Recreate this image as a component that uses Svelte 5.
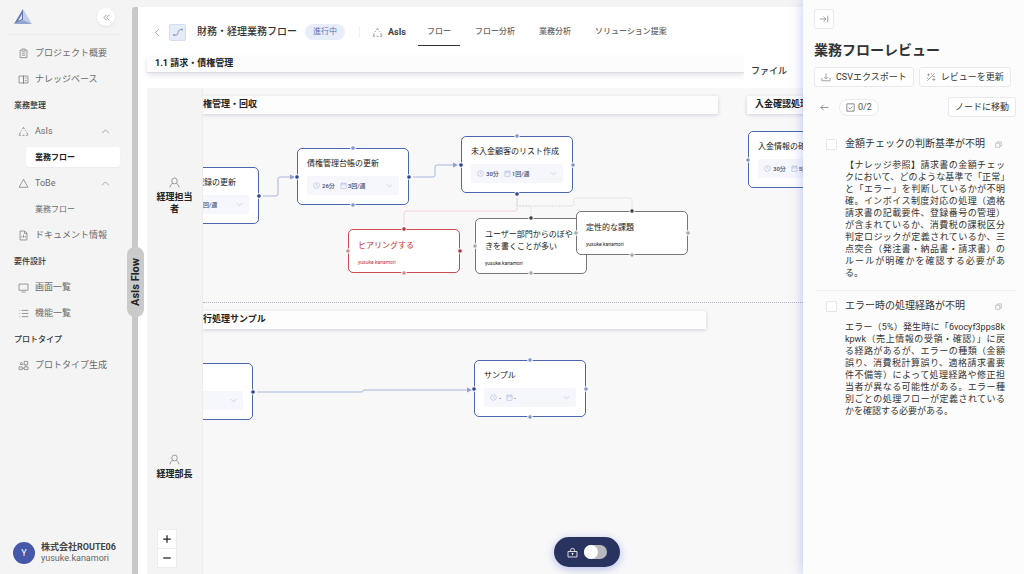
<script lang="ts">
  type IconName = keyof typeof icons;

  type NavItem = {
    label: string;
    kind: 'link' | 'heading' | 'group' | 'sub';
    icon?: IconName;
    active?: boolean;
  };

  type FlowNode = {
    x: number;
    y: number;
    w: number;
    title: string;
    time?: string;
    freq?: string;
    plain?: boolean;
  };

  type IssueNode = {
    x: number;
    y: number;
    title: string;
    tone: 'red' | 'gray';
  };

  const icons = {
    clipboard: 'M4 3H3v11h10V3h-1M5.5 1.5h5v3h-5zM5.5 7.5h5M5.5 10.5h5',
    book: 'M8 3H1.500v10H8zM8 3h6.500v10H8zM8 2v12.500M10 6h2.500M10 9.500h2.500',
    dashed: 'M6.500 4.500 8 2l1.500 2.500M3.500 9 2 12v1.500h2.500M12.500 9l1.500 3v1.500h-2.500M6.500 13.500h3M4.500 7l.8-1.300M11.500 7l-.8-1.300',
    triangle: 'M8 2 14.500 13.500h-13z',
    doc: 'M3 1.500h7l3 3v10H3zM9.500 2v3H13M5.500 11V9M8 11V7M10.500 11V8.500',
    screen: 'M1.500 3h13v9h-13zM5 14.500h6',
    list: 'M2 3.500h1M5.500 3.500H15M2 8h1M5.500 8H15M2 12.500h1M5.500 12.500H15',
    proto: 'M3 6.500 5 3l2 3.500zM9 2h5v5H9zM1.500 10h4.500v4H1.500zM9 10h5.500v4H9zM11.500 7v3M6 12h3',
    up: 'M2 11l6-6 6 6',
    down: 'M2 5l6 6 6-6',
    collapse: 'M8 3 3.500 8 8 13M13 3 8.500 8 13 13',
    back: 'M10.500 2 4.500 8l6 6',
    user: 'M8 1.500a4 4.200 0 0 1 4 4.200A4 4.200 0 0 1 8 10a4 4.200 0 0 1-4-4.300 4 4.200 0 0 1 4-4.200zM1.500 15c0-3 2-5 4-5.500M14.500 15c0-3-2-5-4-5.500',
    clock: 'M8 1.500a6.500 6.500 0 1 1 0 13 6.500 6.500 0 0 1 0-13zM8 4.500V8l3 2',
    calendar: 'M2 3h12v11.500H2zM2 6.500h12M5 1v3M11 1v3',
    plus: 'M8 2v12M2 8h12',
    minus: 'M2 8h12',
    lock: 'M1.500 6.500h13v8h-13zM5 6.500V5a3 3 0 0 1 6 0v1.500M8 8.500v3.500M6.500 9.500h3',
    toEnd: 'M1.500 8H11M7 4l4 4-4 4M14 2.500v11',
    download: 'M1.500 9.500v4.500h13V9.500M8 2v8.500M5 8l3 3 3-3',
    magic: 'M2 14 13.500 2.500M2 4.500h4M4 2.500v4M10 12h5M12.500 9.500v5M8.500 1.500v2M1.500 9.500l2 1M10.500 7.500l4 0',
    arrowLeft: 'M15 8H1.500M6.500 3l-5 5 5 5',
    check: 'M1.500 1.500h13v13h-13zM4.500 8l2.500 2.500L11.500 6',
    copy: 'M1.500 5h9.500v9.500H1.500zM5 5V2h9.500v9.500H11'
  };

  const nav: NavItem[] = [
    { label: 'プロジェクト概要', kind: 'link', icon: 'clipboard' },
    { label: 'ナレッジベース', kind: 'link', icon: 'book' },
    { label: '業務整理', kind: 'heading' },
    { label: 'AsIs', kind: 'group', icon: 'dashed' },
    { label: '業務フロー', kind: 'sub', active: true },
    { label: 'ToBe', kind: 'group', icon: 'triangle' },
    { label: '業務フロー', kind: 'sub' },
    { label: 'ドキュメント情報', kind: 'link', icon: 'doc' },
    { label: '要件設計', kind: 'heading' },
    { label: '画面一覧', kind: 'link', icon: 'screen' },
    { label: '機能一覧', kind: 'link', icon: 'list' },
    { label: 'プロトタイプ', kind: 'heading' },
    { label: 'プロトタイプ生成', kind: 'link', icon: 'proto' }
  ];

  const tabs = ['フロー', 'フロー分析', '業務分析', 'ソリューション提案'];
  let activeTab = $state('フロー');

  // canvas coordinates, origin at the top left of the flow area
  const nodes: FlowNode[] = [
    { x: -17, y: 79, w: 73, title: '記録の更新', freq: '回/週', plain: true },
    { x: 94, y: 60, w: 112, title: '債権管理台帳の更新', time: '26分', freq: '3回/週' },
    { x: 258, y: 48, w: 112, title: '未入金顧客のリスト作成', time: '30分', freq: '1回/週' },
    { x: 545, y: 43, w: 112, title: '入金情報の確認', time: '30分', freq: '5回/週' },
    { x: -17, y: 275, w: 67, title: '', plain: true },
    { x: 271, y: 272, w: 112, title: 'サンプル', time: '-', freq: '-' }
  ];

  const issues: IssueNode[] = [
    { x: 145, y: 141, title: 'ヒアリングする', tone: 'red' },
    { x: 272, y: 130, title: 'ユーザー部門からのぼやきを書くことが多い', tone: 'gray' },
    { x: 373, y: 123, title: '定性的な課題', tone: 'gray' }
  ];

  const handles = [
    { tone: 'blue', points: [[56, 108], [94, 89], [206, 89], [258, 77], [314, 106], [50, 304], [271, 301]] },
    { tone: 'soft', points: [[150, 60], [150, 117], [314, 48], [370, 77], [545, 72], [327, 272], [327, 329], [383, 301]] },
    { tone: 'red', points: [[201, 141], [257, 163]] },
    { tone: 'pink', points: [[145, 163], [201, 185]] },
    { tone: 'dark', points: [[328, 130], [429, 123]] },
    { tone: 'mute', points: [[272, 158], [373, 145], [485, 145], [429, 167], [328, 185]] }
  ];

  const reviews = [
    {
      title: '金額チェックの判断基準が不明',
      body: '【ナレッジ参照】請求書の金額チェックにおいて、どのような基準で「正常」と「エラー」を判断しているかが不明確。インボイス制度対応の処理（適格請求書の記載要件、登録番号の管理）が含まれているか、消費税の課税区分判定ロジックが定義されているか、三点突合（発注書・納品書・請求書）のルールが明確かを確認する必要がある。'
    },
    {
      title: 'エラー時の処理経路が不明',
      body: 'エラー（5%）発生時に「6vocyf3pps8kkpwk（売上情報の受領・確認）」に戻る経路があるが、エラーの種類（金額誤り、消費税計算誤り、適格請求書要件不備等）によって処理経路や修正担当者が異なる可能性がある。エラー種別ごとの処理フローが定義されているかを確認する必要がある。'
    }
  ];

  let unlocked = $state(false);
</script>

{#snippet icon(name: IconName, size = 10)}
  <svg class="icon" width={size} height={size} viewBox="0 0 16 16" aria-hidden="true">
    <path d={icons[name]} />
  </svg>
{/snippet}

<div class="app" lang="ja">
  <aside class="sidebar">
    <div class="brand">
      <svg width="19" height="16" viewBox="0 0 19 16" aria-hidden="true">
        <path d="M9 0 0 15l9-4z" fill="#6478b4" />
        <path d="M9 0v11l9 4z" fill="#c3cde8" />
        <path d="M0 15l9-4 9 4z" fill="#93a3d0" />
        <path d="M8 5 4 12l4-2z" fill="#e3e9f6" />
      </svg>
      <button class="collapse" aria-label="サイドバーを閉じる">{@render icon('collapse', 9)}</button>
    </div>

    <nav class="nav">
      {#each nav as item}
        {#if item.kind === 'heading'}
          <div class="nav-heading">{item.label}</div>
        {:else if item.kind === 'group'}
          <button class="nav-item">
            {#if item.icon}{@render icon(item.icon, 11)}{/if}
            <span class="nav-label">{item.label}</span>
            {@render icon('up', 9)}
          </button>
        {:else if item.kind === 'sub'}
          <a class="nav-sub" class:active={item.active} href="#flow">{item.label}</a>
        {:else}
          <a class="nav-item" href="#page">
            {#if item.icon}{@render icon(item.icon, 11)}{/if}
            <span class="nav-label">{item.label}</span>
          </a>
        {/if}
      {/each}
    </nav>

    <div class="account">
      <span class="avatar">Y</span>
      <div class="account-text">
        <strong>株式会社ROUTE06</strong>
        <span>yusuke.kanamori</span>
      </div>
    </div>
  </aside>

  <div class="rail"><span class="rail-tab">AsIs Flow</span></div>

  <main class="main">
    <header class="header">
      <button class="back" aria-label="戻る">{@render icon('back', 9)}</button>
      <span class="flow-icon">
        <svg width="12" height="12" viewBox="0 0 12 12" aria-hidden="true">
          <path d="M2 9c3.500.5 3.500-.5 4-2.500s1-3 4-3" />
          <circle cx="2" cy="9" r="1" />
          <circle cx="10" cy="3.500" r="1" />
        </svg>
      </span>
      <h1 class="title">財務・経理業務フロー</h1>
      <span class="status">進行中</span>
      <span class="phase">{@render icon('dashed', 11)} AsIs</span>
      <div class="tabs" role="tablist">
        {#each tabs as tab}
          <button
            class="tab"
            class:active={tab === activeTab}
            role="tab"
            aria-selected={tab === activeTab}
            onclick={() => (activeTab = tab)}>{tab}</button
          >
        {/each}
      </div>
    </header>

    <div class="subheader">
      <h2 class="flow-name">1.1 請求・債権管理</h2>
      <button class="file">ファイル</button>
    </div>

    <div class="board">
      <div class="lanes">
        <div class="lane">{@render icon('user', 11)}<span>経理担当者</span></div>
        <div class="lane lane-tall">{@render icon('user', 11)}<span>経理部長</span></div>
        <div class="zoom">
          <button aria-label="拡大">{@render icon('plus')}</button>
          <button aria-label="縮小">{@render icon('minus')}</button>
        </div>
      </div>

      <div class="canvas">
        <div class="band band-a">権管理・回収</div>
        <div class="band band-b">入金確認処理</div>
        <div class="separator"></div>
        <div class="band band-c">行処理サンプル</div>

        <svg class="edges" aria-hidden="true">
          <g class="edge-blue">
            <path d="M60 108H73q2 0 2-2V91q0-2 2-2H88" />
            <path d="M210 89h20q2 0 2-2V79q0-2 2-2h17" />
            <path d="M54 304H158q2 0 2-1t2-1H265" />
          </g>
          <g class="arrow">
            <path d="M87 86.500v5l5-2.500z" />
            <path d="M250 74.500v5l5-2.500z" />
            <path d="M264 299.500v5l5-2.500z" />
          </g>
          <path class="edge-red" d="M314 110v11q0 2-2 2H203q-2 0-2 2v12" />
          <path class="edge-gray" d="M314 110v6q0 2 2 2h10q2 0 2 2v7" />
          <path class="edge-gray" d="M314 116q0 2 2 2h53q2 0 2-2v-4q0-2 2-2h54q2 0 2 2v9" />
        </svg>

        {#each nodes as node}
          <article class="node" style="left: {node.x}px; top: {node.y}px; width: {node.w}px">
            <div class="node-title">{node.title}</div>
            <div class="meta">
              {#if !node.plain}{@render icon('clock', 7)}<span class="time">{node.time}</span>{@render icon('calendar', 7)}{/if}
              <span class="freq">{node.freq}</span>
              {@render icon('down', 7)}
            </div>
          </article>
        {/each}

        {#each issues as issue}
          <article class="issue {issue.tone}" style="left: {issue.x}px; top: {issue.y}px">
            <div class="node-title">{issue.title}</div>
            <div class="owner">yusuke.kanamori</div>
          </article>
        {/each}

        <svg class="edges" aria-hidden="true">
          {#each handles as group}
            {#each group.points as [x, y]}
              <circle class="handle {group.tone}" cx={x} cy={y} r="2.300" />
            {/each}
          {/each}
        </svg>
      </div>

      <label class="lock">
        {@render icon('lock', 11)}
        <input type="checkbox" role="switch" aria-label="ロックを解除" bind:checked={unlocked} />
      </label>
    </div>
  </main>

  <aside class="review">
    <button class="btn btn-square" aria-label="閉じる">{@render icon('toEnd')}</button>
    <h2 class="review-title">業務フローレビュー</h2>
    <div class="actions">
      <button class="btn">{@render icon('download')} CSVエクスポート</button>
      <button class="btn">{@render icon('magic')} レビューを更新</button>
    </div>
    <div class="review-nav">
      <button class="prev" aria-label="前へ">{@render icon('arrowLeft', 9)}</button>
      <span class="count">{@render icon('check', 9)} 0/2</span>
      <button class="btn jump">ノードに移動</button>
    </div>

    <ul class="reviews">
      {#each reviews as review, i}
        <li class="review-item">
          <input type="checkbox" id="review-{i}" />
          <div class="review-content">
            <div class="review-head">
              <label for="review-{i}">{review.title}</label>
              <button class="copy" aria-label="コピー">{@render icon('copy', 7)}</button>
            </div>
            <p>{review.body}</p>
          </div>
        </li>
      {/each}
    </ul>
  </aside>
</div>

<style>
  :global(body) {
    background: #f4f4f4;
  }

  .app {
    display: flex;
    min-height: 100vh;
    overflow: hidden;
    font-family: Roboto, 'Noto Sans CJK JP', sans-serif;
    font-size: 9px;
    line-height: 12px;
    color: #333;
  }

  .app * {
    box-sizing: border-box;
  }

  button {
    margin: 0;
    padding: 0;
    border: none;
    background: none;
    font: inherit;
    color: inherit;
    cursor: pointer;
  }

  a {
    color: inherit;
    text-decoration: none;
  }

  h1,
  h2,
  p,
  ul {
    margin: 0;
    padding: 0;
  }

  .icon {
    flex: none;
    fill: none;
    stroke: currentColor;
    stroke-width: 1.2;
  }

  /* sidebar */
  .sidebar {
    flex: none;
    width: 132px;
    display: flex;
    flex-direction: column;
    background: #f4f4f4;
  }

  .brand {
    display: flex;
    align-items: center;
    justify-content: space-between;
    height: 35px;
    margin: 0 11px 5px 8px;
    padding: 0 6px;
    border-bottom: 1px solid #ebebeb;
  }

  .collapse {
    display: grid;
    place-items: center;
    width: 18px;
    height: 18px;
    border-radius: 50%;
    background: #fff;
    color: #777;
    box-shadow: 0 1px 3px rgba(0, 0, 0, 0.08);
  }

  .nav {
    flex: 1;
    display: flex;
    flex-direction: column;
    color: #6b6b6b;
  }

  .nav-item {
    display: flex;
    align-items: center;
    gap: 6px;
    height: 26px;
    padding: 0 22px 0 18px;
    text-align: left;
    white-space: nowrap;
  }

  .nav-item .icon {
    color: #858585;
  }

  .nav-label {
    flex: 1;
  }

  .nav-heading {
    height: 26px;
    padding-left: 14px;
    font-size: 8px;
    font-weight: 500;
    line-height: 27px;
    color: #333;
  }

  .nav-sub {
    height: 20px;
    margin: 3px 12px 3px 26px;
    padding-left: 9px;
    border-radius: 3px;
    font-size: 8px;
    line-height: 21px;
  }

  .nav-sub.active {
    background: #fff;
    color: #222;
    font-weight: 700;
    box-shadow: 0 1px 2px rgba(0, 0, 0, 0.04);
  }

  .account {
    display: flex;
    align-items: center;
    gap: 6px;
    padding: 0 0 10px 13px;
  }

  .avatar {
    display: grid;
    place-items: center;
    width: 22px;
    height: 22px;
    border-radius: 50%;
    background: #4658aa;
    color: #fff;
  }

  .account-text {
    display: flex;
    flex-direction: column;
    line-height: 11px;
    color: #666;
  }

  .account-text strong {
    color: #444;
  }

  /* rail */
  .rail {
    flex: none;
    position: relative;
    width: 6px;
    margin-top: 7px;
    border-radius: 3px 0 0 0;
    background: #c8c8c8;
  }

  .rail-tab {
    position: absolute;
    top: 240px;
    left: -5px;
    z-index: 2;
    width: 17px;
    height: 70px;
    border-radius: 8px;
    background: #cacaca;
    font-size: 11px;
    font-weight: 700;
    line-height: 17px;
    text-align: center;
    writing-mode: vertical-rl;
    transform: rotate(180deg);
    color: #222;
  }

  /* main */
  .main {
    flex: 1;
    min-width: 0;
    display: flex;
    flex-direction: column;
    margin-top: 7px;
    padding-left: 9px;
    background: #fff;
  }

  .header {
    display: flex;
    align-items: center;
    height: 50px;
    padding-left: 6px;
    white-space: nowrap;
  }

  .back {
    display: flex;
    margin-right: 7px;
    color: #888;
  }

  .flow-icon {
    flex: none;
    display: grid;
    place-items: center;
    width: 17px;
    height: 17px;
    border: 1px solid #d3ddf0;
    border-radius: 2px;
    background: #e6edf9;
  }

  .flow-icon svg {
    fill: none;
    stroke: #7f93c4;
  }

  .flow-icon circle {
    fill: #7f93c4;
    stroke: none;
  }

  .title {
    margin: 0 8px 0 11px;
    font-size: 10px;
    font-weight: 500;
  }

  .status {
    padding: 2px 8px;
    border-radius: 8px;
    background: #e8edfa;
    font-size: 8px;
    color: #5c71b4;
  }

  .phase {
    display: flex;
    align-items: center;
    gap: 5px;
    margin-left: 14px;
    padding-left: 12px;
    border-left: 1px solid #f2f2f2;
    font-weight: 700;
    color: #444;
  }

  .phase .icon {
    color: #888;
  }

  .tabs {
    display: flex;
    gap: 6px;
    margin-left: 12px;
  }

  .tab {
    height: 28px;
    padding: 0 9px;
    border-bottom: 1px solid transparent;
    font-size: 8px;
    font-weight: 500;
    color: #666;
  }

  .tab.active {
    border-color: #333;
  }

  .subheader {
    display: flex;
    align-items: flex-start;
    height: 31px;
  }

  .flow-name {
    flex: 1;
    height: 16px;
    padding-left: 8px;
    background: #fcfcfc;
    border-bottom: 1px solid #dcdce6;
    box-shadow: 0 2px 5px rgba(60, 60, 110, 0.16);
    font-size: 9px;
    font-weight: 700;
    color: #222;
  }

  .file {
    position: relative;
    width: 59px;
    height: 27px;
    padding-left: 7px;
    background: #fff;
    text-align: left;
    font-weight: 500;
  }

  .board {
    flex: 1;
    display: flex;
    position: relative;
    min-height: 0;
    overflow: hidden;
  }

  .lanes {
    flex: none;
    position: relative;
    width: 56px;
    border-right: 1px solid #ececec;
    background: #f4f4f4;
    overflow: hidden;
  }

  .lane {
    display: flex;
    flex-direction: column;
    align-items: center;
    justify-content: center;
    gap: 3px;
    height: 216px;
    padding: 0 9px;
    text-align: center;
    font-weight: 700;
    color: #222;
  }

  .lane .icon {
    color: #888;
  }

  .lane-tall {
    height: 326px;
    margin-bottom: -56px;
  }

  .zoom {
    position: absolute;
    bottom: 6px;
    left: 10px;
    display: flex;
    flex-direction: column;
    gap: 1px;
    border: 1px solid #ededed;
    background: #ededed;
  }

  .zoom button {
    display: grid;
    place-items: center;
    width: 18px;
    height: 18px;
    background: #fff;
    color: #222;
  }

  .zoom .icon {
    stroke-width: 2;
  }

  /* canvas */
  .canvas {
    flex: 1;
    position: relative;
    overflow: hidden;
    background: #f8f8f9;
  }

  .band {
    position: absolute;
    height: 18px;
    background: #fdfdfe;
    box-shadow: 0 1px 4px rgba(50, 50, 90, 0.2);
    line-height: 17px;
    font-weight: 700;
    white-space: nowrap;
    color: #222;
  }

  .band-a {
    top: 8px;
    left: 0;
    width: 515px;
  }

  .band-b {
    top: 8px;
    left: 544px;
    width: 300px;
    padding-left: 8px;
  }

  .band-c {
    top: 223px;
    left: 0;
    width: 503px;
  }

  .separator {
    position: absolute;
    top: 214px;
    width: 100%;
    border-top: 1px dotted #b4b4bc;
  }

  .edges {
    position: absolute;
    inset: 0;
    width: 100%;
    height: 100%;
    fill: none;
    pointer-events: none;
  }

  .edge-blue {
    stroke: #a9b6dc;
  }

  .arrow {
    fill: #8fa0d0;
  }

  .edge-red {
    stroke: #f0d3d3;
  }

  .edge-gray {
    stroke: #dcdcdc;
    stroke-dasharray: 2 1;
  }

  .node,
  .issue {
    position: absolute;
    border: 1px solid #4c66b0;
    border-radius: 5px;
    background: #fff;
  }

  .node {
    padding: 9px;
  }

  .node-title {
    min-height: 12px;
    font-size: 8px;
    line-height: 12px;
    color: #222;
  }

  .meta {
    display: flex;
    align-items: center;
    height: 19px;
    margin-top: 6px;
    padding: 0 6px;
    border-radius: 2px;
    background: #f5f7fd;
    font-size: 6px;
    font-weight: 500;
    white-space: nowrap;
    color: #454c6e;
  }

  .meta .icon {
    color: #a3b2dc;
  }

  .time {
    margin: 0 5px 0 2px;
  }

  .freq {
    flex: 1;
    margin-left: 1px;
  }

  .issue {
    width: 112px;
    padding: 10px 9px 5px;
  }

  .owner {
    margin-top: 5px;
    font-size: 5px;
    line-height: 10px;
    color: #222;
  }

  .issue.gray {
    border-color: #777;
  }

  .issue.red {
    border-color: #cf4a50;
  }

  .red .node-title,
  .red .owner {
    color: #c43238;
  }

  .handle {
    stroke: #fff;
    stroke-width: 1;
  }

  .handle.blue {
    fill: #2f4690;
  }

  .handle.soft {
    fill: #8497cb;
  }

  .handle.red {
    fill: #b5333a;
  }

  .handle.pink {
    fill: #dc8a8e;
  }

  .handle.dark {
    fill: #444;
  }

  .handle.mute {
    fill: #aaa;
  }

  .lock {
    position: absolute;
    bottom: 7px;
    left: 407px;
    display: flex;
    align-items: center;
    gap: 6px;
    height: 30px;
    padding: 0 13px;
    border-radius: 15px;
    background: #28335f;
    color: #fff;
    box-shadow: 0 2px 8px rgba(80, 100, 210, 0.4);
  }

  .lock input {
    appearance: none;
    display: flex;
    width: 23px;
    height: 14px;
    margin: 0;
    border-radius: 7px;
    background: #b9b9bd;
  }

  .lock input::before {
    content: '';
    width: 14px;
    height: 14px;
    border-radius: 50%;
    background: #fff;
  }

  .lock input:checked {
    justify-content: flex-end;
    background: #6f86d6;
  }

  /* review panel */
  .review {
    flex: none;
    position: relative;
    z-index: 3;
    width: 221px;
    padding: 9px 8px 0 11px;
    background: #fcfcfc;
    box-shadow: 0 0 12px rgba(70, 90, 220, 0.35);
  }

  .btn {
    display: flex;
    align-items: center;
    gap: 5px;
    height: 20px;
    padding: 0 6px;
    border: 1px solid #e9e9e9;
    border-radius: 3px;
    background: #fff;
    white-space: nowrap;
  }

  .btn .icon {
    color: #888;
  }

  .btn-square {
    justify-content: center;
    width: 20px;
  }

  .review-title {
    margin: 11px 0 7px;
    font-size: 14px;
    font-weight: 700;
    line-height: 20px;
  }

  .actions {
    display: flex;
    gap: 5px;
  }

  .review-nav {
    display: flex;
    align-items: center;
    margin: 10px 0 21px;
    padding-left: 6px;
  }

  .prev {
    display: flex;
    color: #666;
  }

  .count {
    display: flex;
    align-items: center;
    gap: 3px;
    height: 17px;
    margin-left: 10px;
    padding: 0 6px;
    border: 1px solid #e9e9e9;
    border-radius: 9px;
    background: #fff;
    color: #555;
  }

  .jump {
    margin-left: auto;
  }

  .reviews {
    padding-left: 2px;
    list-style: none;
  }

  .review-item {
    display: flex;
    gap: 8px;
    padding: 0 11px 11px 10px;
  }

  .review-item + .review-item {
    padding-top: 9px;
    border-top: 1px solid #efefef;
  }

  .review-item input {
    appearance: none;
    flex: none;
    width: 11px;
    height: 11px;
    margin: 1px 0 0;
    border: 1px solid #e6e6e6;
    border-radius: 1px;
    background: #fff;
  }

  .review-item input:checked {
    background: #4658aa;
  }

  .review-content {
    flex: 1;
    min-width: 0;
  }

  .review-head {
    display: flex;
    align-items: center;
    justify-content: space-between;
    padding-right: 3px;
    font-size: 10px;
  }

  .copy {
    display: flex;
    color: #999;
  }

  .review-item p {
    margin-top: 9px;
    text-align: justify;
    word-break: break-all;
  }
</style>
